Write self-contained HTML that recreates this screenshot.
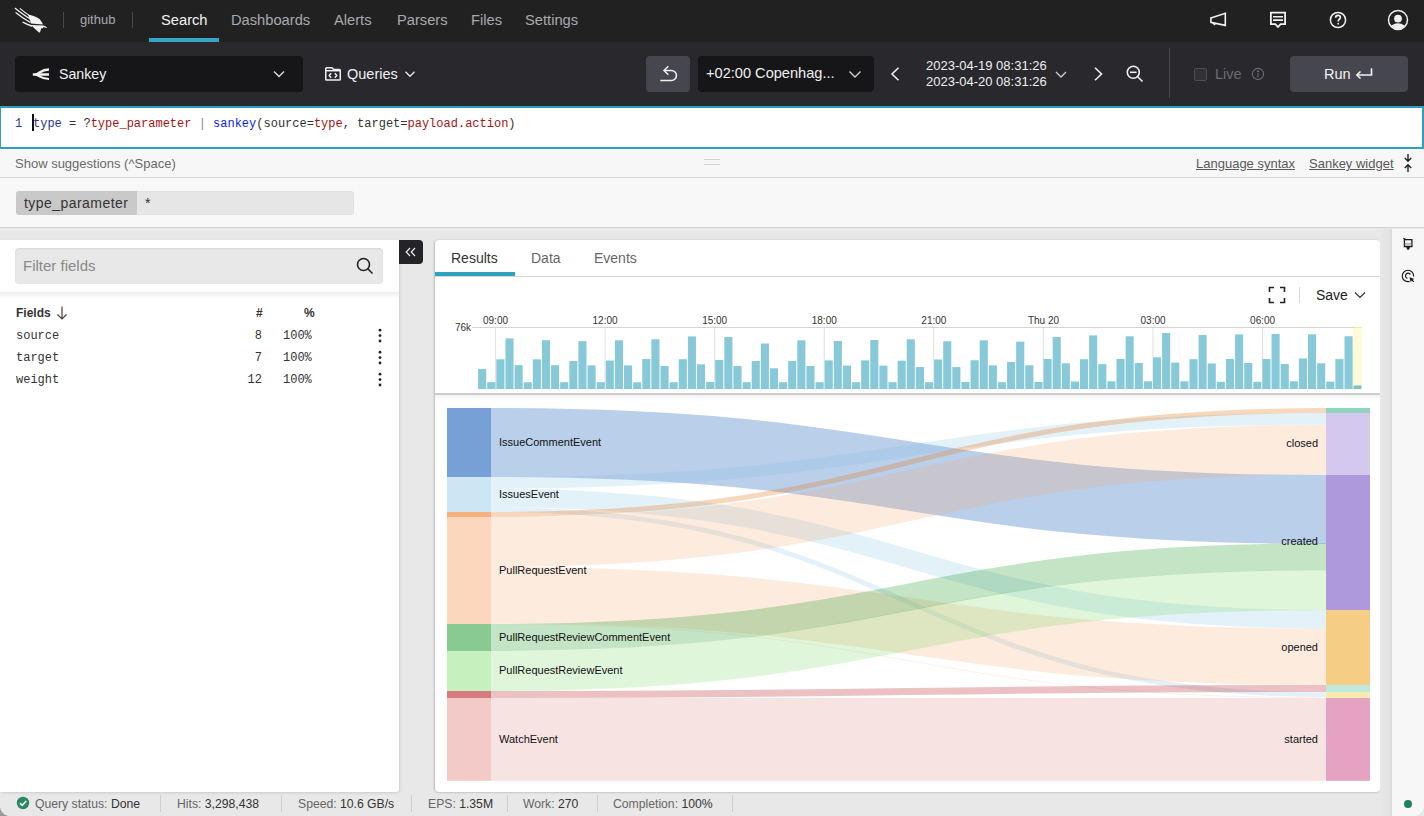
<!DOCTYPE html>
<html><head><meta charset="utf-8">
<style>
*{box-sizing:border-box;margin:0;padding:0}
html,body{width:1424px;height:816px;overflow:hidden;background:#e9e9e9;font-family:"Liberation Sans",sans-serif;}
.abs{position:absolute}
.t{position:absolute;white-space:pre;line-height:1}
.mono{font-family:"Liberation Mono",monospace}
svg{position:absolute;overflow:visible}
</style></head><body>
<!-- NAV -->
<div class="abs" style="left:0;top:0;width:1424px;height:42px;background:#212122"></div>
<svg style="left:0;top:0" width="60" height="42" viewBox="0 0 60 42">
  <g stroke="#f2f2f2" stroke-linecap="round" fill="none">
    <path d="M15.2 8.3 C19 11.5 24 15 29.5 18.6" stroke-width="1.2"/>
    <path d="M20.2 8.6 C23 11 26 13.3 29.5 15.6" stroke-width="1.1"/>
    <path d="M16 12.7 C20 16 25 19.5 30 22.2" stroke-width="1.2"/>
    <path d="M23.2 22.4 C26 23.8 28.8 25 31.6 26" stroke-width="1.6"/>
  </g>
  <g fill="#f2f2f2">
    <path d="M28 14.6 C32 15.3 36.5 16.8 39.8 19.2 L42.3 23 L42.8 24.6 L31 23.6 C30 20.5 29 17.5 28 14.6Z"/>
    <path d="M31.2 25 L43.6 25.6 C44.8 26 46 26.6 47.1 27.5 L46.3 28 C45.2 27.6 44.2 27.3 43.3 27.3 L42.3 28.6 L41.2 28.2 L40 32.6 L39 32.4 C36.5 30.2 33.5 27.8 31.2 25Z"/>
  </g>
</svg>
<div class="abs" style="left:63px;top:12px;width:1px;height:16px;background:#4a4a4e"></div>
<div class="t" style="left:80px;top:13px;font-size:13px;color:#a9a9ad">github</div>
<div class="abs" style="left:132px;top:12px;width:1px;height:16px;background:#4a4a4e"></div>
<div class="t" style="left:161px;top:13px;font-size:14.7px;color:#f4f4f4">Search</div>
<div class="abs" style="left:149px;top:38px;width:70px;height:4px;background:#37a6c4"></div>
<div class="t" style="left:231px;top:13px;font-size:14.7px;color:#a9a9ad">Dashboards</div>
<div class="t" style="left:334px;top:13px;font-size:14.7px;color:#a9a9ad">Alerts</div>
<div class="t" style="left:397px;top:13px;font-size:14.7px;color:#a9a9ad">Parsers</div>
<div class="t" style="left:471px;top:13px;font-size:14.7px;color:#a9a9ad">Files</div>
<div class="t" style="left:525px;top:13px;font-size:14.7px;color:#a9a9ad">Settings</div>
<!-- nav icons -->
<svg style="left:1204px;top:6px" width="28" height="28" viewBox="0 0 28 28" fill="none" stroke="#f2f2f2" stroke-width="1.6" stroke-linejoin="miter">
  <path d="M6.9 11.9 L21.3 7.3 V19.4 L6.9 16.4 Z"/>
  <path d="M8.6 16.8 L10.4 18.6 L11.8 17.2" stroke-width="1.4"/>
</svg>
<svg style="left:1264px;top:6px" width="28" height="28" viewBox="0 0 28 28" fill="none" stroke="#f2f2f2" stroke-width="1.8">
  <path d="M6.9 6.7 H21.1 V18.1 H16.6 L14 21 L11.4 18.1 H6.9 Z" stroke-linejoin="miter"/>
  <path d="M9 10.8 H19 M9 14.1 H19" stroke-width="1.6"/>
</svg>
<svg style="left:1325px;top:7px" width="26" height="26" viewBox="0 0 26 26" fill="none" stroke="#f0f0f0" stroke-width="1.5">
  <circle cx="13" cy="13" r="7.6"/>
  <path d="M10.6 10.8 C10.6 9.3 11.7 8.4 13 8.4 C14.4 8.4 15.4 9.3 15.4 10.6 C15.4 12.2 13.2 12.3 13.2 14.4" stroke-width="1.7"/>
  <circle cx="13.2" cy="16.7" r="0.9" fill="#f0f0f0" stroke="none"/>
</svg>
<svg style="left:1385px;top:7px" width="26" height="26" viewBox="0 0 26 26">
  <defs><clipPath id="uc"><circle cx="13" cy="13" r="9.3"/></clipPath></defs>
  <circle cx="13" cy="13" r="9.5" fill="none" stroke="#f0f0f0" stroke-width="1.5"/>
  <g clip-path="url(#uc)" fill="#f0f0f0">
    <circle cx="13" cy="11.6" r="3.9"/>
    <ellipse cx="13" cy="23.2" rx="8.6" ry="7"/>
  </g>
</svg>
<!-- TOOLBAR -->
<div class="abs" style="left:0;top:42px;width:1424px;height:64px;background:#28282d"></div>
<div class="abs" style="left:15px;top:56px;width:288px;height:36px;background:#161618;border-radius:4px"></div>
<svg style="left:30px;top:64px" width="22" height="20" viewBox="0 0 22 20" fill="none" stroke="#f2f2f2" stroke-width="2.5" stroke-linecap="butt">
  <path d="M2.8 10.5 H19"/>
  <path d="M5.5 10.6 C9.5 9.2 11.5 5.5 19 5.5" stroke-width="2.3"/>
  <path d="M5.5 10.4 C9.5 11.8 11.5 15 19 15" stroke-width="2.2"/>
</svg>
<div class="t" style="left:59px;top:66.5px;font-size:14.2px;color:#f2f2f2">Sankey</div>
<svg style="left:272px;top:67px" width="14" height="14" viewBox="0 0 14 14" fill="none" stroke="#e0e0e0" stroke-width="1.3"><path d="M2 4.5 L7 9.5 L12 4.5"/></svg>
<svg style="left:320px;top:62px" width="26" height="24" viewBox="0 0 26 24" fill="none" stroke="#f0f0f0" stroke-width="1.5" stroke-linejoin="round">
  <path d="M5.75 17.2 V6.5 Q5.75 5.65 6.6 5.65 H12 L13.6 7.4 H19.4 Q20.25 7.4 20.25 8.25 V17.2 Q20.25 18.05 19.4 18.05 H6.6 Q5.75 18.05 5.75 17.2 Z"/>
  <path d="M5.75 8.7 H20.25"/>
  <path d="M11.2 11.3 L9.2 13.5 L11.2 15.7 M14.8 11.3 L16.8 13.5 L14.8 15.7" stroke-width="1.6"/>
</svg>
<div class="t" style="left:347px;top:67px;font-size:14.5px;color:#f0f0f0">Queries</div>
<svg style="left:403px;top:67px" width="14" height="14" viewBox="0 0 14 14" fill="none" stroke="#e8e8e8" stroke-width="1.4"><path d="M2.5 4.8 L7 9.2 L11.5 4.8"/></svg>

<div class="abs" style="left:646px;top:56px;width:44px;height:36px;background:#46464f;border-radius:4px"></div>
<svg style="left:656px;top:63px" width="24" height="22" viewBox="0 0 24 22" fill="none" stroke="#f0f0f0" stroke-width="1.5">
  <path d="M4.3 17.4 H15.5 A4.95 4.95 0 0 0 15.5 7.5 H8.2"/>
  <path d="M12.3 3.3 L8 7.5 L12.3 11.7"/>
</svg>
<div class="abs" style="left:698px;top:56px;width:176px;height:36px;background:#161618;border-radius:4px"></div>
<div class="t" style="left:706px;top:66px;font-size:14.6px;color:#f0f0f0">+02:00 Copenhag...</div>
<svg style="left:848px;top:67px" width="14" height="14" viewBox="0 0 14 14" fill="none" stroke="#cfcfcf" stroke-width="1.4"><path d="M1.5 4.5 L7 10 L12.5 4.5"/></svg>
<svg style="left:888px;top:66px" width="16" height="16" viewBox="0 0 16 16" fill="none" stroke="#f0f0f0" stroke-width="1.6"><path d="M10.5 1.7 L4 8 L10.5 14.3"/></svg>
<div class="t" style="left:926px;top:59px;font-size:13px;color:#f0f0f0">2023-04-19 08:31:26</div>
<div class="t" style="left:926px;top:75px;font-size:13px;color:#f0f0f0">2023-04-20 08:31:26</div>
<svg style="left:1054px;top:67px" width="14" height="14" viewBox="0 0 14 14" fill="none" stroke="#cfcfcf" stroke-width="1.3"><path d="M2 5 L7 10 L12 5"/></svg>
<svg style="left:1090px;top:66px" width="16" height="16" viewBox="0 0 16 16" fill="none" stroke="#f0f0f0" stroke-width="1.6"><path d="M5 1.7 L11.5 8 L5 14.3"/></svg>
<svg style="left:1125px;top:64px" width="20" height="20" viewBox="0 0 20 20" fill="none" stroke="#f0f0f0" stroke-width="1.6">
  <circle cx="8.3" cy="8.3" r="6"/>
  <path d="M12.7 12.7 L17.5 17.5"/>
  <path d="M5 8.3 H11.6"/>
</svg>
<div class="abs" style="left:1169px;top:48px;width:1px;height:50px;background:#48484d"></div>
<div class="abs" style="left:1194px;top:68px;width:13px;height:13px;border:1px solid #4d4d52;background:#313136;border-radius:2px"></div>
<div class="t" style="left:1215px;top:67px;font-size:14.5px;color:#6b6b78">Live</div>
<svg style="left:1251px;top:67px" width="14" height="14" viewBox="0 0 14 14" fill="none" stroke="#6b6b75" stroke-width="1.1">
  <circle cx="7" cy="7" r="5.6"/><path d="M7 6 V10.3"/><circle cx="7" cy="4.2" r="0.5" fill="#6b6b75"/>
</svg>
<div class="abs" style="left:1290px;top:56px;width:118px;height:36px;background:#46464f;border-radius:4px"></div>
<div class="t" style="left:1324px;top:66.5px;font-size:14.5px;color:#f4f4f4">Run</div>
<svg style="left:1353px;top:64px" width="22" height="20" viewBox="0 0 22 20" fill="none" stroke="#f4f4f4" stroke-width="1.6">
  <path d="M18.5 4.3 V11 H4"/>
  <path d="M7.5 7.5 L3.8 11 L7.5 14.5"/>
</svg>
<!-- EDITOR -->
<div class="abs" style="left:0;top:106px;width:1424px;height:43px;background:#fff;border:2px solid #2f9fbb;border-left-width:1px"></div>
<div class="t mono" style="left:15px;top:118px;font-size:12px;color:#2a3a8a">1</div>
<div class="abs" style="left:32px;top:114px;width:2px;height:17px;background:#111"></div>
<div class="t mono" style="left:33px;top:118px;font-size:12px;color:#333"><span style="color:#25348f">type</span> = ?<span style="color:#a31515">type_parameter</span> <span style="color:#888">|</span> <span style="color:#0a1ee6">sankey</span>(source=<span style="color:#a31515">type</span>, target=<span style="color:#a31515">payload.action</span>)</div>
<!-- SUGGESTIONS -->
<div class="abs" style="left:0;top:149px;width:1424px;height:29px;background:#f7f7f7;border-bottom:1px solid #d9d9d9"></div>
<div class="t" style="left:15px;top:157px;font-size:13px;color:#6a6a6a">Show suggestions (^Space)</div>
<div class="abs" style="left:704px;top:159px;width:16px;height:1px;background:#d2d2d2"></div>
<div class="abs" style="left:704px;top:164px;width:16px;height:1px;background:#d2d2d2"></div>
<div class="t" style="left:1196px;top:157px;font-size:13px;color:#5a5a5a;text-decoration:underline">Language syntax</div>
<div class="t" style="left:1309px;top:157px;font-size:13px;color:#5a5a5a;text-decoration:underline">Sankey widget</div>
<svg style="left:1400px;top:153px" width="16" height="20" viewBox="0 0 16 20" fill="none" stroke="#222" stroke-width="1.4">
  <path d="M8 1 V8 M4.8 5 L8 8.2 L11.2 5"/>
  <path d="M8 19 V12 M4.8 15 L8 11.8 L11.2 15"/>
</svg>
<!-- PARAMS -->
<div class="abs" style="left:0;top:178px;width:1424px;height:50px;background:#f8f8f8;border-bottom:1px solid #d2d2d2"></div>
<div class="abs" style="left:16px;top:191px;width:338px;height:24px;background:#e6e6e6;border-radius:3px;border:1px solid #e0e0e0"></div>
<div class="abs" style="left:16px;top:191px;width:121px;height:24px;background:#c9c9c9;border-radius:3px 0 0 3px"></div>
<div class="t" style="left:24px;top:196px;font-size:14px;color:#333;letter-spacing:0.45px">type_parameter</div>
<div class="t" style="left:145px;top:196px;font-size:14px;color:#333">*</div>
<!-- MAIN -->
<div class="abs" style="left:0;top:229px;width:1424px;height:587px;background:#e8e8e8"></div>
<!-- left panel -->
<div class="abs" style="left:0;top:240px;width:398.5px;height:551.7px;background:#fff;border-radius:0 0 3px 0;box-shadow:1px 1px 3px rgba(0,0,0,0.13)"></div>
<div class="abs" style="left:15px;top:248px;width:368px;height:36px;background:#e8e8e8;border-radius:4px;box-shadow:inset 0 1px 2px rgba(0,0,0,0.08)"></div>
<div class="t" style="left:23px;top:258px;font-size:15px;color:#8a8a8a">Filter fields</div>
<svg style="left:354px;top:255px" width="22" height="22" viewBox="0 0 22 22" fill="none" stroke="#222" stroke-width="1.6">
  <circle cx="9.5" cy="9.5" r="6"/><path d="M13.8 13.8 L18.5 18.5"/>
</svg>
<div class="abs" style="left:0;top:292px;width:399px;height:6px;background:linear-gradient(#ececec,#fff)"></div>
<div class="t" style="left:16px;top:306.5px;font-size:12px;font-weight:700;color:#333">Fields</div>
<svg style="left:55px;top:305px" width="14" height="16" viewBox="0 0 14 16" fill="none" stroke="#444" stroke-width="1.2">
  <path d="M7 1.5 V14 M2.5 9.5 L7 14 L11.5 9.5"/>
</svg>
<div class="t" style="left:256px;top:306.5px;font-size:12px;font-weight:700;color:#333">#</div>
<div class="t" style="left:304px;top:306.5px;font-size:12px;font-weight:700;color:#333">%</div>
<div class="t mono" style="left:16px;top:329.5px;font-size:12px;color:#333">source</div>
<div class="t mono" style="left:16px;top:351.5px;font-size:12px;color:#333">target</div>
<div class="t mono" style="left:16px;top:373.5px;font-size:12px;color:#333">weight</div>
<div class="t mono" style="left:240px;top:329.5px;font-size:12px;color:#333;width:22px;text-align:right">8</div>
<div class="t mono" style="left:240px;top:351.5px;font-size:12px;color:#333;width:22px;text-align:right">7</div>
<div class="t mono" style="left:240px;top:373.5px;font-size:12px;color:#333;width:22px;text-align:right">12</div>
<div class="t mono" style="left:283px;top:329.5px;font-size:12px;color:#333">100%</div>
<div class="t mono" style="left:283px;top:351.5px;font-size:12px;color:#333">100%</div>
<div class="t mono" style="left:283px;top:373.5px;font-size:12px;color:#333">100%</div>
<svg style="left:376px;top:327.5px" width="8" height="60" viewBox="0 0 8 60" fill="#222">
  <circle cx="4" cy="2.2" r="1.4"/><circle cx="4" cy="7.6" r="1.4"/><circle cx="4" cy="13" r="1.4"/>
  <circle cx="4" cy="24.2" r="1.4"/><circle cx="4" cy="29.6" r="1.4"/><circle cx="4" cy="35" r="1.4"/>
  <circle cx="4" cy="46.2" r="1.4"/><circle cx="4" cy="51.6" r="1.4"/><circle cx="4" cy="57" r="1.4"/>
</svg>
<!-- collapse btn -->
<div class="abs" style="left:399px;top:240px;width:24px;height:24px;background:#242428;border-radius:0 4px 4px 0"></div>
<svg style="left:403px;top:245px" width="16" height="14" viewBox="0 0 16 14" fill="none" stroke="#eee" stroke-width="1.2">
  <path d="M7 3 L3.2 7 L7 11 M12 3 L8.2 7 L12 11"/>
</svg>
<!-- results panel -->
<div class="abs" style="left:435px;top:240px;width:945px;height:551.6px;background:#fff;border-radius:4px;box-shadow:-1px 0 2px rgba(0,0,0,0.16), 0 1px 2px rgba(0,0,0,0.1)"></div>
<div class="abs" style="left:435px;top:276px;width:945px;height:1px;background:#d6d6d6"></div>
<div class="abs" style="left:435px;top:272px;width:80px;height:4px;background:#2ea2be"></div>
<div class="t" style="left:451px;top:251px;font-size:14px;color:#333">Results</div>
<div class="t" style="left:531px;top:251px;font-size:14px;color:#666">Data</div>
<div class="t" style="left:594px;top:251px;font-size:14px;color:#666">Events</div>
<svg style="left:1267px;top:285px" width="20" height="20" viewBox="0 0 20 20" fill="none" stroke="#222" stroke-width="1.6">
  <path d="M2.5 7 V2.5 H7 M13 2.5 H17.5 V7 M17.5 13 V17.5 H13 M7 17.5 H2.5 V13"/>
</svg>
<div class="abs" style="left:1299px;top:287px;width:1px;height:16px;background:#d8d8d8"></div>
<div class="t" style="left:1316px;top:288px;font-size:14px;color:#222">Save</div>
<svg style="left:1353px;top:288px" width="14" height="14" viewBox="0 0 14 14" fill="none" stroke="#333" stroke-width="1.2"><path d="M2 4.5 L7 9.5 L12 4.5"/></svg>
<div class="abs" style="left:435px;top:393px;width:945px;height:1.5px;background:#cdcdcd"></div><div class="abs" style="left:435px;top:394.5px;width:945px;height:5px;background:linear-gradient(rgba(0,0,0,0.06),rgba(0,0,0,0))"></div>
<!-- right sidebar -->
<div class="abs" style="left:1380px;top:229px;width:12px;height:587px;background:linear-gradient(90deg,#e8e8e8,#e2e2e2 80%,#d9d9d9)"></div>
<div class="abs" style="left:1392px;top:229px;width:32px;height:587px;background:#f7f7f7;border-radius:0 0 10px 0"></div>
<svg style="left:1396px;top:232px" width="24" height="24" viewBox="0 0 24 24" fill="none" stroke="#1a1a1a" stroke-width="1.3">
  <path d="M7.3 6.3 L9.6 7.6 H15.9 V14.5 H8.4 V7.6"/><path d="M8.6 11.9 H15.6" stroke="#888" stroke-width="1.1"/>
  <path d="M10.6 14.7 L11.4 17.3 H12.9 L13.6 14.7" fill="#1a1a1a" stroke-width="0.8"/>
</svg>
<svg style="left:1396px;top:262px" width="24" height="24" viewBox="0 0 24 24" fill="none" stroke="#1a1a1a" stroke-width="1.2">
  <path d="M17.6 14.6 A5.7 5.7 0 1 0 13.6 19.4"/>
  <path d="M14.4 12.6 A2.6 2.6 0 1 0 11.4 16.3"/>
  <path d="M13.5 15.2 L18.4 16.9 L16.4 17.8 L18.2 19.5 L17.3 20.3 L15.6 18.6 L14.8 20.4 Z" fill="#111" stroke="none"/>
</svg>
<div class="abs" style="left:1404px;top:800px;width:8px;height:8px;background:#23805a;border-radius:50%"></div>
<!-- STATUS -->
<div class="abs" style="left:0;top:806px;width:10px;height:10px;background:radial-gradient(circle at 10px 0,rgba(0,0,0,0) 9.5px,#9a9a9a 10.5px)"></div>

<svg style="left:16px;top:796px" width="14" height="14" viewBox="0 0 14 14">
  <circle cx="7" cy="7" r="6.2" fill="#268a5e"/><path d="M4 7.2 L6.2 9.3 L10.2 5" fill="none" stroke="#fff" stroke-width="1.7"/>
</svg>
<div class="t" style="left:35px;top:798px;font-size:12.2px;color:#666">Query status: <span style="color:#333">Done</span></div>
<div class="abs" style="left:160px;top:795px;width:1px;height:17px;background:#cfcfcf"></div>
<div class="t" style="left:177px;top:798px;font-size:12.2px;color:#666">Hits: <span style="color:#333">3,298,438</span></div>
<div class="abs" style="left:281px;top:795px;width:1px;height:17px;background:#cfcfcf"></div>
<div class="t" style="left:298px;top:798px;font-size:12.2px;color:#666">Speed: <span style="color:#333">10.6 GB/s</span></div>
<div class="abs" style="left:411px;top:795px;width:1px;height:17px;background:#cfcfcf"></div>
<div class="t" style="left:428px;top:798px;font-size:12.2px;color:#666">EPS: <span style="color:#333">1.35M</span></div>
<div class="abs" style="left:507px;top:795px;width:1px;height:17px;background:#cfcfcf"></div>
<div class="t" style="left:523px;top:798px;font-size:12.2px;color:#666">Work: <span style="color:#333">270</span></div>
<div class="abs" style="left:597px;top:795px;width:1px;height:17px;background:#cfcfcf"></div>
<div class="t" style="left:613px;top:798px;font-size:12.2px;color:#666">Completion: <span style="color:#333">100%</span></div>
<div class="abs" style="left:732px;top:795px;width:1px;height:17px;background:#cfcfcf"></div>
<svg style="left:0;top:0" width="1424" height="816" viewBox="0 0 1424 816">
<text x="471" y="330.5" font-size="10" fill="#333" text-anchor="end" font-family="Liberation Sans">76k</text>
<rect x="472" y="327" width="890" height="1" fill="#d4d4d4"/>
<rect x="494.90" y="328" width="1" height="62" fill="#e0e0e0"/>
<rect x="604.49" y="328" width="1" height="62" fill="#e0e0e0"/>
<rect x="714.08" y="328" width="1" height="62" fill="#e0e0e0"/>
<rect x="823.67" y="328" width="1" height="62" fill="#e0e0e0"/>
<rect x="933.26" y="328" width="1" height="62" fill="#e0e0e0"/>
<rect x="1042.85" y="328" width="1" height="62" fill="#e0e0e0"/>
<rect x="1152.44" y="328" width="1" height="62" fill="#e0e0e0"/>
<rect x="1262.03" y="328" width="1" height="62" fill="#e0e0e0"/>
<text x="495.50" y="324" font-size="10" fill="#333" text-anchor="middle" font-family="Liberation Sans">09:00</text>
<text x="605.09" y="324" font-size="10" fill="#333" text-anchor="middle" font-family="Liberation Sans">12:00</text>
<text x="714.68" y="324" font-size="10" fill="#333" text-anchor="middle" font-family="Liberation Sans">15:00</text>
<text x="824.27" y="324" font-size="10" fill="#333" text-anchor="middle" font-family="Liberation Sans">18:00</text>
<text x="933.86" y="324" font-size="10" fill="#333" text-anchor="middle" font-family="Liberation Sans">21:00</text>
<text x="1043.45" y="324" font-size="10" fill="#333" text-anchor="middle" font-family="Liberation Sans">Thu 20</text>
<text x="1153.04" y="324" font-size="10" fill="#333" text-anchor="middle" font-family="Liberation Sans">03:00</text>
<text x="1262.63" y="324" font-size="10" fill="#333" text-anchor="middle" font-family="Liberation Sans">06:00</text>
<rect x="1353" y="327" width="9" height="62" fill="#fefcd8"/>
<rect x="1353" y="327" width="9" height="1" fill="#efeab0"/>
<rect x="478.10" y="369.00" width="8.1" height="20.00" fill="#87c9d8"/>
<rect x="487.22" y="382.20" width="8.1" height="6.80" fill="#87c9d8"/>
<rect x="496.34" y="359.30" width="8.1" height="29.70" fill="#87c9d8"/>
<rect x="505.46" y="338.40" width="8.1" height="50.60" fill="#87c9d8"/>
<rect x="514.58" y="365.20" width="8.1" height="23.80" fill="#87c9d8"/>
<rect x="523.70" y="382.20" width="8.1" height="6.80" fill="#87c9d8"/>
<rect x="532.82" y="359.30" width="8.1" height="29.70" fill="#87c9d8"/>
<rect x="541.94" y="340.20" width="8.1" height="48.80" fill="#87c9d8"/>
<rect x="551.06" y="365.20" width="8.1" height="23.80" fill="#87c9d8"/>
<rect x="560.18" y="382.20" width="8.1" height="6.80" fill="#87c9d8"/>
<rect x="569.30" y="361.00" width="8.1" height="28.00" fill="#87c9d8"/>
<rect x="578.42" y="341.20" width="8.1" height="47.80" fill="#87c9d8"/>
<rect x="587.54" y="365.40" width="8.1" height="23.60" fill="#87c9d8"/>
<rect x="596.66" y="382.20" width="8.1" height="6.80" fill="#87c9d8"/>
<rect x="605.78" y="360.50" width="8.1" height="28.50" fill="#87c9d8"/>
<rect x="614.90" y="340.30" width="8.1" height="48.70" fill="#87c9d8"/>
<rect x="624.02" y="365.40" width="8.1" height="23.60" fill="#87c9d8"/>
<rect x="633.14" y="382.30" width="8.1" height="6.70" fill="#87c9d8"/>
<rect x="642.26" y="359.00" width="8.1" height="30.00" fill="#87c9d8"/>
<rect x="651.38" y="339.30" width="8.1" height="49.70" fill="#87c9d8"/>
<rect x="660.50" y="366.00" width="8.1" height="23.00" fill="#87c9d8"/>
<rect x="669.62" y="382.20" width="8.1" height="6.80" fill="#87c9d8"/>
<rect x="678.74" y="359.20" width="8.1" height="29.80" fill="#87c9d8"/>
<rect x="687.86" y="336.40" width="8.1" height="52.60" fill="#87c9d8"/>
<rect x="696.98" y="364.30" width="8.1" height="24.70" fill="#87c9d8"/>
<rect x="706.10" y="382.00" width="8.1" height="7.00" fill="#87c9d8"/>
<rect x="715.22" y="360.00" width="8.1" height="29.00" fill="#87c9d8"/>
<rect x="724.34" y="337.00" width="8.1" height="52.00" fill="#87c9d8"/>
<rect x="733.46" y="366.00" width="8.1" height="23.00" fill="#87c9d8"/>
<rect x="742.58" y="382.20" width="8.1" height="6.80" fill="#87c9d8"/>
<rect x="751.70" y="361.00" width="8.1" height="28.00" fill="#87c9d8"/>
<rect x="760.82" y="343.50" width="8.1" height="45.50" fill="#87c9d8"/>
<rect x="769.94" y="368.30" width="8.1" height="20.70" fill="#87c9d8"/>
<rect x="779.06" y="382.20" width="8.1" height="6.80" fill="#87c9d8"/>
<rect x="788.18" y="361.00" width="8.1" height="28.00" fill="#87c9d8"/>
<rect x="797.30" y="340.30" width="8.1" height="48.70" fill="#87c9d8"/>
<rect x="806.42" y="366.00" width="8.1" height="23.00" fill="#87c9d8"/>
<rect x="815.54" y="382.20" width="8.1" height="6.80" fill="#87c9d8"/>
<rect x="824.66" y="360.40" width="8.1" height="28.60" fill="#87c9d8"/>
<rect x="833.78" y="341.00" width="8.1" height="48.00" fill="#87c9d8"/>
<rect x="842.90" y="365.60" width="8.1" height="23.40" fill="#87c9d8"/>
<rect x="852.02" y="382.20" width="8.1" height="6.80" fill="#87c9d8"/>
<rect x="861.14" y="360.40" width="8.1" height="28.60" fill="#87c9d8"/>
<rect x="870.26" y="340.00" width="8.1" height="49.00" fill="#87c9d8"/>
<rect x="879.38" y="365.60" width="8.1" height="23.40" fill="#87c9d8"/>
<rect x="888.50" y="382.20" width="8.1" height="6.80" fill="#87c9d8"/>
<rect x="897.62" y="360.70" width="8.1" height="28.30" fill="#87c9d8"/>
<rect x="906.74" y="339.30" width="8.1" height="49.70" fill="#87c9d8"/>
<rect x="915.86" y="367.00" width="8.1" height="22.00" fill="#87c9d8"/>
<rect x="924.98" y="382.20" width="8.1" height="6.80" fill="#87c9d8"/>
<rect x="934.10" y="359.50" width="8.1" height="29.50" fill="#87c9d8"/>
<rect x="943.22" y="341.30" width="8.1" height="47.70" fill="#87c9d8"/>
<rect x="952.34" y="367.10" width="8.1" height="21.90" fill="#87c9d8"/>
<rect x="961.46" y="382.00" width="8.1" height="7.00" fill="#87c9d8"/>
<rect x="970.58" y="360.20" width="8.1" height="28.80" fill="#87c9d8"/>
<rect x="979.70" y="340.30" width="8.1" height="48.70" fill="#87c9d8"/>
<rect x="988.82" y="365.40" width="8.1" height="23.60" fill="#87c9d8"/>
<rect x="997.94" y="382.20" width="8.1" height="6.80" fill="#87c9d8"/>
<rect x="1007.06" y="362.00" width="8.1" height="27.00" fill="#87c9d8"/>
<rect x="1016.18" y="341.70" width="8.1" height="47.30" fill="#87c9d8"/>
<rect x="1025.30" y="365.30" width="8.1" height="23.70" fill="#87c9d8"/>
<rect x="1034.42" y="382.00" width="8.1" height="7.00" fill="#87c9d8"/>
<rect x="1043.54" y="359.00" width="8.1" height="30.00" fill="#87c9d8"/>
<rect x="1052.66" y="337.00" width="8.1" height="52.00" fill="#87c9d8"/>
<rect x="1061.78" y="363.30" width="8.1" height="25.70" fill="#87c9d8"/>
<rect x="1070.90" y="381.50" width="8.1" height="7.50" fill="#87c9d8"/>
<rect x="1080.02" y="359.20" width="8.1" height="29.80" fill="#87c9d8"/>
<rect x="1089.14" y="335.40" width="8.1" height="53.60" fill="#87c9d8"/>
<rect x="1098.26" y="364.10" width="8.1" height="24.90" fill="#87c9d8"/>
<rect x="1107.38" y="381.30" width="8.1" height="7.70" fill="#87c9d8"/>
<rect x="1116.50" y="359.00" width="8.1" height="30.00" fill="#87c9d8"/>
<rect x="1125.62" y="336.30" width="8.1" height="52.70" fill="#87c9d8"/>
<rect x="1134.74" y="363.00" width="8.1" height="26.00" fill="#87c9d8"/>
<rect x="1143.86" y="381.30" width="8.1" height="7.70" fill="#87c9d8"/>
<rect x="1152.98" y="357.30" width="8.1" height="31.70" fill="#87c9d8"/>
<rect x="1162.10" y="333.00" width="8.1" height="56.00" fill="#87c9d8"/>
<rect x="1171.22" y="362.70" width="8.1" height="26.30" fill="#87c9d8"/>
<rect x="1180.34" y="381.30" width="8.1" height="7.70" fill="#87c9d8"/>
<rect x="1189.46" y="359.20" width="8.1" height="29.80" fill="#87c9d8"/>
<rect x="1198.58" y="335.00" width="8.1" height="54.00" fill="#87c9d8"/>
<rect x="1207.70" y="363.50" width="8.1" height="25.50" fill="#87c9d8"/>
<rect x="1216.82" y="381.80" width="8.1" height="7.20" fill="#87c9d8"/>
<rect x="1225.94" y="359.00" width="8.1" height="30.00" fill="#87c9d8"/>
<rect x="1235.06" y="334.40" width="8.1" height="54.60" fill="#87c9d8"/>
<rect x="1244.18" y="363.00" width="8.1" height="26.00" fill="#87c9d8"/>
<rect x="1253.30" y="381.80" width="8.1" height="7.20" fill="#87c9d8"/>
<rect x="1262.42" y="359.00" width="8.1" height="30.00" fill="#87c9d8"/>
<rect x="1271.54" y="334.00" width="8.1" height="55.00" fill="#87c9d8"/>
<rect x="1280.66" y="364.00" width="8.1" height="25.00" fill="#87c9d8"/>
<rect x="1289.78" y="381.30" width="8.1" height="7.70" fill="#87c9d8"/>
<rect x="1298.90" y="358.40" width="8.1" height="30.60" fill="#87c9d8"/>
<rect x="1308.02" y="334.30" width="8.1" height="54.70" fill="#87c9d8"/>
<rect x="1317.14" y="363.30" width="8.1" height="25.70" fill="#87c9d8"/>
<rect x="1326.26" y="381.60" width="8.1" height="7.40" fill="#87c9d8"/>
<rect x="1335.38" y="359.10" width="8.1" height="29.90" fill="#87c9d8"/>
<rect x="1344.50" y="336.30" width="8.1" height="52.70" fill="#87c9d8"/>
<rect x="1353.5" y="385.4" width="8" height="3.6" fill="#80c4b8"/>
<path d="M491,442.50 C908.5,442.50 908.5,509.50 1326,509.50" fill="none" stroke="#195fb9" stroke-opacity="0.301" stroke-width="69.00"/>
<path d="M491,482.80 C908.5,482.80 908.5,418.80 1326,418.80" fill="none" stroke="#80bfe4" stroke-opacity="0.220" stroke-width="11.60"/>
<path d="M491,497.90 C908.5,497.90 908.5,619.30 1326,619.30" fill="none" stroke="#80bfe4" stroke-opacity="0.220" stroke-width="18.60"/>
<path d="M491,509.60 C908.5,509.60 908.5,694.65 1326,694.65" fill="none" stroke="#80bfe4" stroke-opacity="0.220" stroke-width="4.80"/>
<path d="M491,514.50 C908.5,514.50 908.5,410.50 1326,410.50" fill="none" stroke="#e7781a" stroke-opacity="0.289" stroke-width="5.00"/>
<path d="M491,542.00 C908.5,542.00 908.5,449.70 1326,449.70" fill="none" stroke="#f6a469" stroke-opacity="0.220" stroke-width="50.00"/>
<path d="M491,595.15 C908.5,595.15 908.5,656.75 1326,656.75" fill="none" stroke="#f6a469" stroke-opacity="0.220" stroke-width="56.30"/>
<path d="M491,623.65 C908.5,623.65 908.5,697.65 1326,697.65" fill="none" stroke="#f6a469" stroke-opacity="0.220" stroke-width="0.70"/>
<path d="M491,637.50 C908.5,637.50 908.5,556.80 1326,556.80" fill="none" stroke="#1d9825" stroke-opacity="0.261" stroke-width="27.00"/>
<path d="M491,671.00 C908.5,671.00 908.5,589.95 1326,589.95" fill="none" stroke="#72d65b" stroke-opacity="0.220" stroke-width="40.00"/>
<path d="M491,694.50 C908.5,694.50 908.5,688.50 1326,688.50" fill="none" stroke="#b61c23" stroke-opacity="0.273" stroke-width="7.00"/>
<path d="M491,739.40 C908.5,739.40 908.5,739.40 1326,739.40" fill="none" stroke="#df8080" stroke-opacity="0.220" stroke-width="82.80"/>
<rect x="447" y="408" width="44" height="69" fill="#76a0d6"/>
<rect x="447" y="477" width="44" height="35" fill="#cce6f4"/>
<rect x="447" y="512" width="44" height="5" fill="#f6b17f"/>
<rect x="447" y="517" width="44" height="107" fill="#fcd7bd"/>
<rect x="447" y="624" width="44" height="27" fill="#88ca91"/>
<rect x="447" y="651" width="44" height="40" fill="#c6f0bd"/>
<rect x="447" y="691" width="44" height="7" fill="#d77b80"/>
<rect x="447" y="698" width="44" height="82.79999999999995" fill="#f3cac8"/>
<rect x="1326" y="408" width="44" height="5" fill="#8dd4c0"/>
<rect x="1326" y="413" width="44" height="62" fill="#d5c8ee"/>
<rect x="1326" y="475" width="44" height="135" fill="#ae99dc"/>
<rect x="1326" y="610" width="44" height="75" fill="#f5cd84"/>
<rect x="1326" y="685" width="44" height="7" fill="#bfe9dc"/>
<rect x="1326" y="692" width="44" height="6" fill="#f9eab0"/>
<rect x="1326" y="698" width="44" height="82.79999999999995" fill="#e6a2c3"/>
<text x="499" y="445.8" font-size="11" fill="#111" font-family="Liberation Sans">IssueCommentEvent</text>
<text x="499" y="497.5" font-size="11" fill="#111" font-family="Liberation Sans">IssuesEvent</text>
<text x="499" y="573.8" font-size="11" fill="#111" font-family="Liberation Sans">PullRequestEvent</text>
<text x="499" y="641" font-size="11" fill="#111" font-family="Liberation Sans">PullRequestReviewCommentEvent</text>
<text x="499" y="673.8" font-size="11" fill="#111" font-family="Liberation Sans">PullRequestReviewEvent</text>
<text x="499" y="742.8" font-size="11" fill="#111" font-family="Liberation Sans">WatchEvent</text>
<text x="1318" y="446.9" font-size="11" fill="#111" text-anchor="end" font-family="Liberation Sans">closed</text>
<text x="1318" y="544.8" font-size="11" fill="#111" text-anchor="end" font-family="Liberation Sans">created</text>
<text x="1318" y="650.7" font-size="11" fill="#111" text-anchor="end" font-family="Liberation Sans">opened</text>
<text x="1318" y="742.7" font-size="11" fill="#111" text-anchor="end" font-family="Liberation Sans">started</text>
</svg>
</body></html>
